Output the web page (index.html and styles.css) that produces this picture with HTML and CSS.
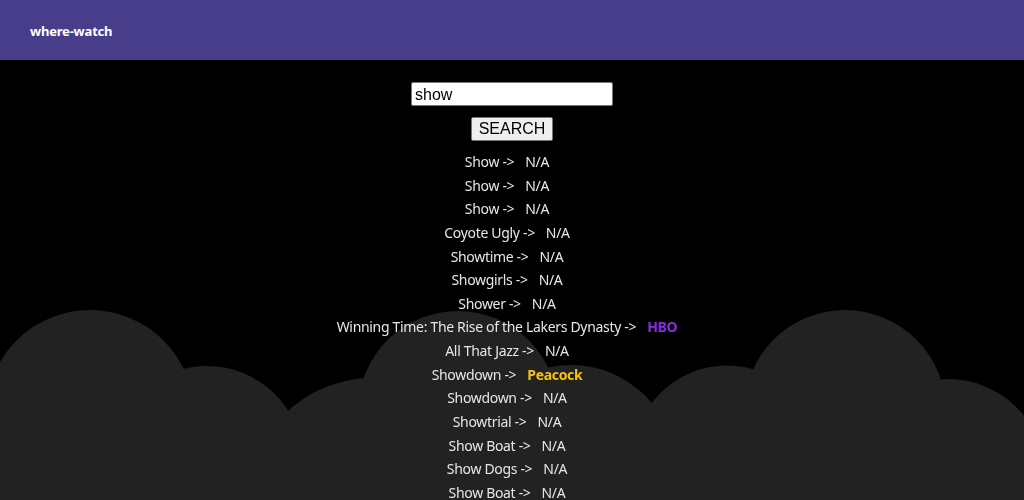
FILE: index.html
```html
<!DOCTYPE html>
<html lang="en">
<head>
<meta charset="utf-8">
<title>where-watch</title>
<link rel="stylesheet" href="styles.css">
</head>
<body>
<div class="clouds" aria-hidden="true">
  <svg viewBox="0 0 1024 500" width="1024" height="500">
    <g fill="#222222">
      <circle cx="90" cy="414" r="104"/>
      <circle cx="207" cy="462" r="96"/>
      <circle cx="372" cy="502" r="124"/>
      <circle cx="458" cy="411" r="100"/>
      <circle cx="571" cy="470" r="105"/>
      <circle cx="727" cy="460" r="94.5"/>
      <circle cx="845" cy="411" r="101"/>
      <circle cx="948" cy="476" r="97"/>
      <rect x="0" y="450" width="1024" height="50"/>
    </g>
  </svg>
</div>
<header class="topbar">
  <span class="brand">where-watch</span>
</header>
<main class="content">
  <form class="search">
    <input class="search-input" type="text" value="show">
    <button class="search-btn" type="button">SEARCH</button>
  </form>
  <ul class="results">
    <li class="row"><span class="title">Show -&gt;</span><span class="svc">N/A</span></li>
    <li class="row"><span class="title">Show -&gt;</span><span class="svc">N/A</span></li>
    <li class="row"><span class="title">Show -&gt;</span><span class="svc">N/A</span></li>
    <li class="row"><span class="title">Coyote Ugly -&gt;</span><span class="svc">N/A</span></li>
    <li class="row"><span class="title">Showtime -&gt;</span><span class="svc">N/A</span></li>
    <li class="row"><span class="title">Showgirls -&gt;</span><span class="svc">N/A</span></li>
    <li class="row"><span class="title">Shower -&gt;</span><span class="svc">N/A</span></li>
    <li class="row"><span class="title">Winning Time: The Rise of the Lakers Dynasty -&gt;</span><span class="svc svc-hbo">HBO</span></li>
    <li class="row"><span class="title">All That Jazz -&gt;</span><span class="svc">N/A</span></li>
    <li class="row"><span class="title">Showdown -&gt;</span><span class="svc svc-peacock">Peacock</span></li>
    <li class="row"><span class="title">Showdown -&gt;</span><span class="svc">N/A</span></li>
    <li class="row"><span class="title">Showtrial -&gt;</span><span class="svc">N/A</span></li>
    <li class="row"><span class="title">Show Boat -&gt;</span><span class="svc">N/A</span></li>
    <li class="row"><span class="title">Show Dogs -&gt;</span><span class="svc">N/A</span></li>
    <li class="row"><span class="title">Show Boat -&gt;</span><span class="svc">N/A</span></li>
  </ul>
</main>
</body>
</html>
```
FILE: styles.css
```css
html, body {
  margin: 0;
  padding: 0;
}
body {
  background: #000;
  color: #e6e6e6;
  font-family: "Noto Sans", "Open Sans", sans-serif;
  overflow: hidden;
}
.clouds {
  position: fixed;
  left: 0;
  top: 0;
  width: 1024px;
  height: 500px;
  z-index: 0;
}
.clouds svg {
  display: block;
}
.topbar {
  position: relative;
  z-index: 1;
  box-sizing: border-box;
  height: 60px;
  background: #483d8b;
  display: flex;
  align-items: center;
  padding: 2px 0 0 30px;
}
.brand {
  color: #fff;
  font-weight: 700;
  font-size: 13px;
  letter-spacing: -0.2px;
}
.content {
  position: relative;
  z-index: 1;
  display: flex;
  flex-direction: column;
  align-items: center;
}
.search {
  display: flex;
  flex-direction: column;
  align-items: center;
  gap: 11px;
  margin: 22px 0 0;
}
.search-input {
  box-sizing: border-box;
  width: 202px;
  height: 24px;
  border: 1px solid #767676;
  border-radius: 2px;
  padding: 2px 3px 1px;
  font-family: "Liberation Sans", Arial, sans-serif;
  font-size: 16px;
  color: #000;
  background: #fff;
}
.search-btn {
  box-sizing: border-box;
  height: 24px;
  padding: 1px 7px;
  border: 1px solid #767676;
  border-radius: 2px;
  background: #efefef;
  font-family: "Liberation Sans", Arial, sans-serif;
  font-size: 16px;
  color: #000;
}
.results {
  list-style: none;
  margin: 9px 0 0;
  padding: 0;
  display: flex;
  flex-direction: column;
  align-items: center;
}
.row {
  font-size: 14px;
  line-height: 23.64px;
  letter-spacing: -0.32px;
  white-space: nowrap;
}
.svc {
  margin: 0 10px 0 11px;
}
.svc-hbo {
  color: #8a2be2;
  font-weight: 700;
}
.svc-peacock {
  color: #f5c211;
  font-weight: 700;
}
```
